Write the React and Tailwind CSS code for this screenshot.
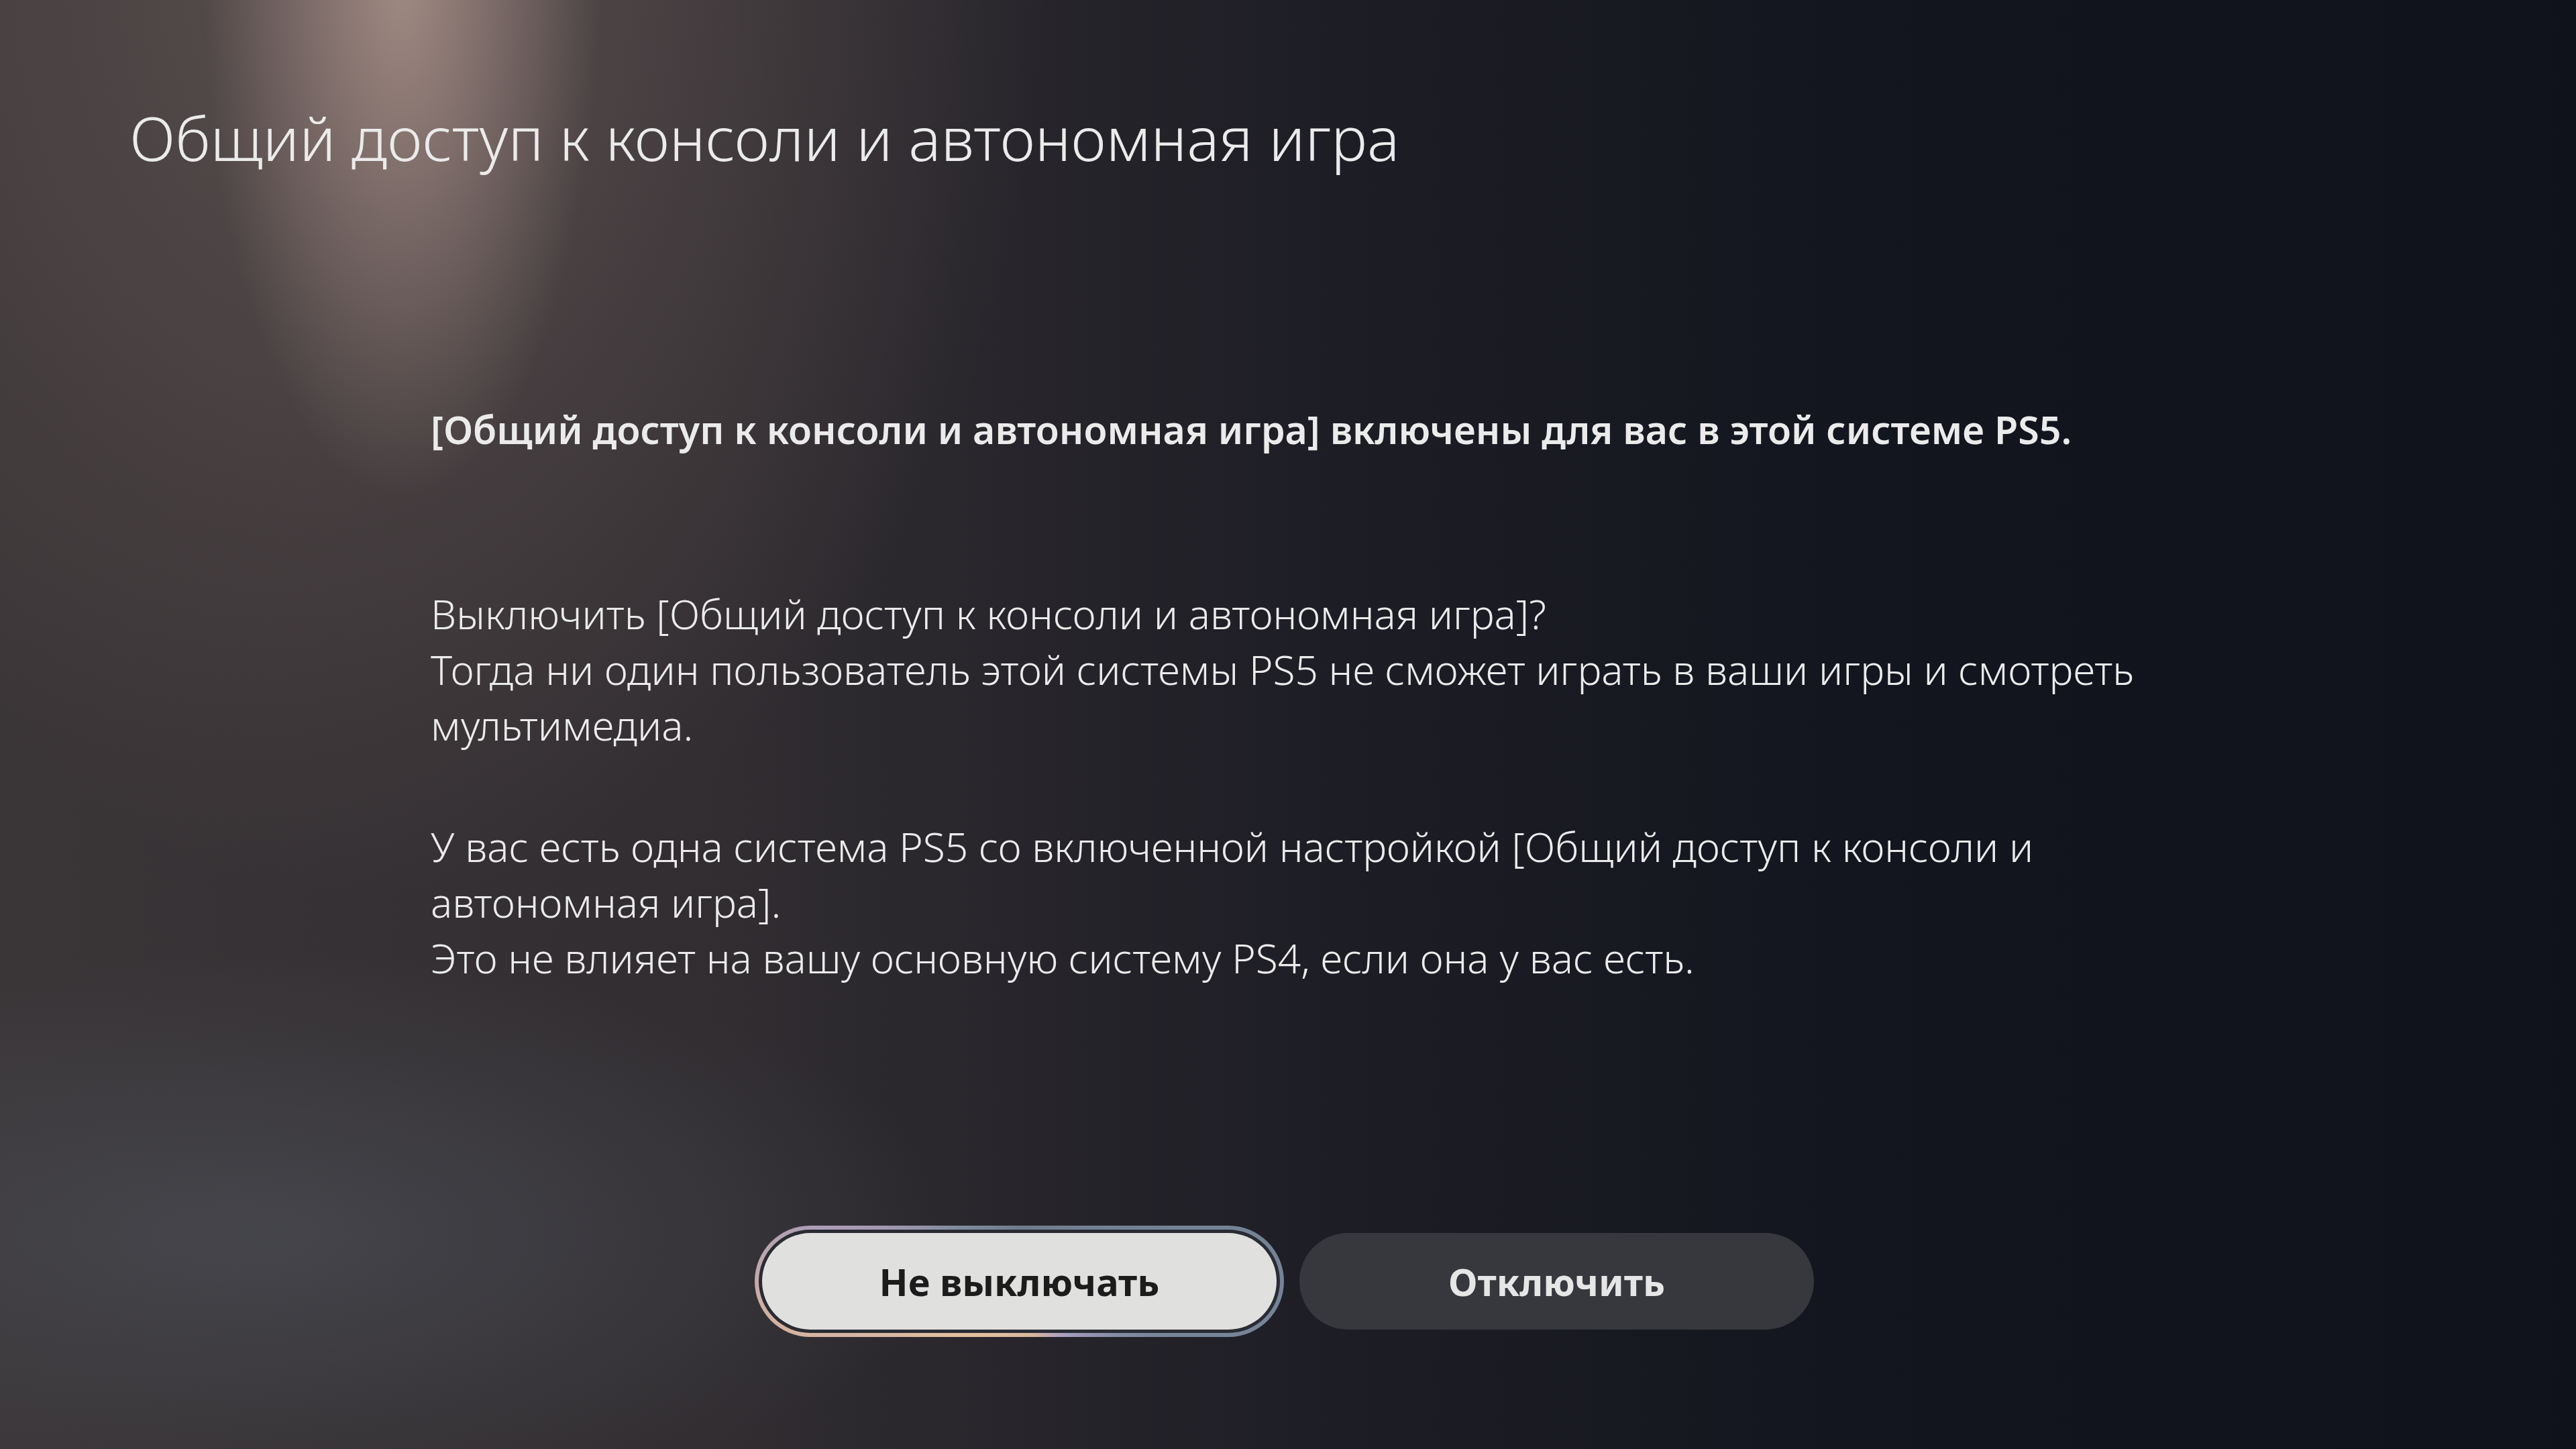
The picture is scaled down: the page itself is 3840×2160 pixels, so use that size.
import React from 'react';

const font = 'font-["Noto_Sans","Open_Sans",sans-serif]';

const Background =
  'bg-[image:radial-gradient(ellipse_380px_1000px_at_600px_-40px,rgba(200,170,160,0.65),rgba(200,170,160,0)_78%),radial-gradient(ellipse_1250px_1750px_at_560px_-60px,rgba(125,108,104,0.5),rgba(125,108,104,0)_80%),radial-gradient(ellipse_1400px_560px_at_380px_1840px,rgba(78,82,90,0.6),rgba(78,82,90,0)_75%),linear-gradient(to_right,#3a3537_0%,#312d31_28%,#1d1d25_52%,#13161f_72%,#0f121b_100%)]';

const PrimaryButton = ({ children }) => (
  <div className="relative">
    {/* focus ring */}
    <span className="absolute -inset-[11px] rounded-full bg-[conic-gradient(from_0deg,#6e7c8c_0deg,#76859a_110deg,#a99fc2_140deg,#d8b79c_165deg,#e3c09e_230deg,#d2b1a2_262deg,#ad9db4_285deg,#7f8b9d_310deg,#6e7c8c_360deg)]" />
    <span className="absolute -inset-[5px] rounded-full bg-[#292c32]" />
    <button className="relative w-[767px] h-[144px] rounded-full bg-[#e0e0de] text-[#1c1c1c] text-[56px] font-bold">
      {children}
    </button>
  </div>
);

const SecondaryButton = ({ children }) => (
  <button className="w-[767px] h-[144px] rounded-full bg-[#37383d] text-[#e6e6e6] text-[56px] font-bold">
    {children}
  </button>
);

export default function App() {
  return (
    <div className={`w-full h-screen overflow-hidden flex flex-col text-[#ebebeb] ${font} ${Background}`}>
      <h1 className="pl-[193px] pt-[151px] text-[90.6px] leading-[1.2] font-light">
        Общий доступ к консоли и автономная игра
      </h1>

      <div className="ml-[642px] mt-[340px] w-[2650px]">
        <p className="text-[57.3px] leading-[1.4] font-semibold">
          [Общий доступ к консоли и автономная игра] включены для вас в этой системе PS5.
        </p>
        <p className="mt-[193px] text-[60.4px] leading-[83px] font-light">
          Выключить [Общий доступ к консоли и автономная игра]?
          <br />
          Тогда ни один пользователь этой системы PS5 не сможет играть в ваши игры и смотреть мультимедиа.
        </p>
        <p className="mt-[98px] text-[60.4px] leading-[83px] font-light">
          У вас есть одна система PS5 со включенной настройкой [Общий доступ к консоли и автономная игра].
          <br />
          Это не влияет на вашу основную систему PS4, если она у вас есть.
        </p>
      </div>

      <div className="mt-[369px] flex justify-center gap-[34px]">
        <PrimaryButton>Не выключать</PrimaryButton>
        <SecondaryButton>Отключить</SecondaryButton>
      </div>
    </div>
  );
}
